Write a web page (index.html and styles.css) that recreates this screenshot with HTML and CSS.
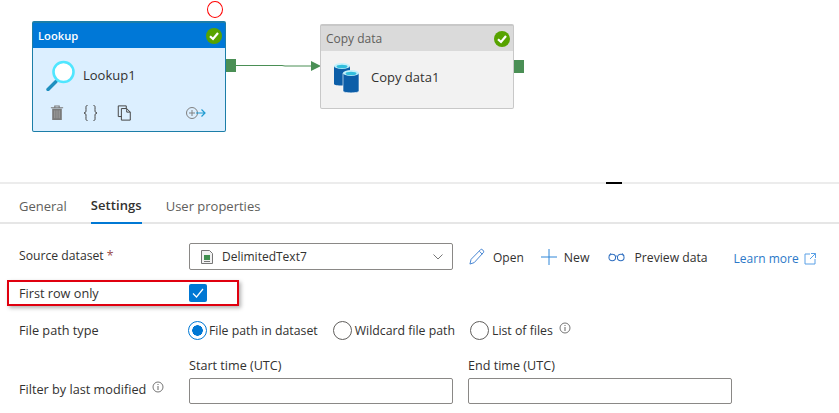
FILE: index.html
```html
<!DOCTYPE html>
<html lang="en">
<head>
<meta charset="utf-8">
<title>Lookup settings</title>
<link rel="stylesheet" href="styles.css">
</head>
<body>
<section class="canvas">
  <div class="marker"></div>
  <div class="node lookup">
    <div class="node-head"><span>Lookup</span>
      <svg class="ok" viewBox="0 0 16 16"><circle cx="8" cy="8" r="8" fill="#57a300"/><path d="M4 8.200 7 11l5-6" fill="none" stroke="#fff" stroke-width="2.200"/></svg>
    </div>
    <div class="node-body">
      <svg class="node-icon" viewBox="0 0 32 32" width="32" height="32"><path d="M3 30.500 11 22.500" stroke="#1f8fbf" stroke-width="3.400" stroke-linecap="round"/><circle cx="18.500" cy="13" r="10" fill="#fff" stroke="#50e6ff" stroke-width="2.600"/></svg>
      <span class="node-name">Lookup1</span>
    </div>
    <div class="node-tools">
      <svg class="t1" viewBox="0 0 16 18" width="14" height="16"><path d="M1 3h14M5.500 3V1h5v2" fill="none" stroke="#7a7a7a" stroke-width="1.300"/><path d="M2.500 4h11v13h-11z" fill="#7a7a7a"/><path d="M5.500 6v9M8 6v9M10.500 6v9" stroke="#a5a5a5"/></svg>
      <svg class="t2" viewBox="0 0 15 16" width="15" height="16"><path d="M4.500 .5C2.500 .5 3 2 3 4.500S3 7.500 1 8c2 .5 2 1 2 3.500s-.5 4 1.500 4M10.500 .5C12.500 .5 12 2 12 4.500s0 3 2 3.500c-2 .5-2 1-2 3.500s.5 4-1.500 4" fill="none" stroke="#444"/></svg>
      <svg class="t3" viewBox="0 0 16 18" width="15" height="16"><path d="M10 3.500V1H1v12h3.500" fill="none" stroke="#444" stroke-width="1.100"/><path d="M4.500 4h6l4 4v9h-10zM10.500 4v4h4" fill="none" stroke="#444" stroke-width="1.100"/></svg>
      <svg class="t4" viewBox="0 0 22 14" width="22" height="14"><circle cx="7" cy="7" r="5.500" fill="none" stroke="#808080"/><path d="M7 4v6M4 7h6" stroke="#808080"/><path d="M11 7h9M16.500 3.500 20 7l-3.500 3.500" fill="none" stroke="#1f9bd1" stroke-width="1.200"/></svg>
    </div>
  </div>
  <div class="port port-a"></div>
  <svg class="link" viewBox="0 0 86 10" width="86" height="10"><path d="M0 4.500H47L50 5H76" fill="none" stroke="#4a8f55"/><path d="M76 0l10 5-10 5z" fill="#4a8f55"/></svg>
  <div class="node copy">
    <div class="node-head"><span>Copy data</span>
      <svg class="ok" viewBox="0 0 16 16"><circle cx="8" cy="8" r="8" fill="#57a300"/><path d="M4 8.200 7 11l5-6" fill="none" stroke="#fff" stroke-width="2.200"/></svg>
    </div>
    <div class="node-body">
      <svg class="node-icon" viewBox="0 0 26 32" width="26" height="32"><path d="M0 4v18c0 2 16 2 16 0V4z" fill="#0c5ea8"/><ellipse cx="8" cy="4" rx="8" ry="3" fill="#c3f1fb"/><ellipse cx="8" cy="4.500" rx="5.500" ry="1.800" fill="#32bedd"/><path d="M9 11v18c0 2.500 16 2.500 16 0V11z" fill="#0c5ea8" stroke="#fff" stroke-width=".6"/><ellipse cx="17" cy="11" rx="8" ry="3" fill="#c3f1fb"/><ellipse cx="17" cy="11.500" rx="5.500" ry="1.800" fill="#32bedd"/></svg>
      <span class="node-name">Copy data1</span>
    </div>
  </div>
  <div class="port port-b"></div>
</section>

<div class="divider"><span class="grip"></span></div>

<nav class="tabs">
  <span class="tab">General</span>
  <span class="tab active">Settings</span>
  <span class="tab">User properties</span>
</nav>

<main class="form">
  <div class="row row-source">
    <div class="label label-source">Source dataset <span class="req">*</span></div>
    <div class="select">
      <svg class="file" viewBox="0 0 12 14" width="12" height="14"><path d="M.5.500h8l3 3v10H.5z" fill="#f2f2f2" stroke="#777"/><path d="M3 5h6v5H3z" fill="#3f8f4f"/><path d="M3 11.500h6" stroke="#777"/></svg>
      <span class="select-text">DelimitedText7</span>
      <svg class="chev" viewBox="0 0 10 6" width="10" height="6"><path d="M.5.500 5 5 9.500.500" fill="none" stroke="#777"/></svg>
    </div>
    <div class="actions">
      <span class="action a-open"><svg viewBox="0 0 18 18" width="17" height="17"><path d="M1 17l1.200-5L12.500 1.500c1-1 3.800 1.800 3 3L5.500 15.500z M11 3.500l3 3" fill="none" stroke="#3f7fd0"/></svg>Open</span>
      <span class="action a-new"><svg viewBox="0 0 16 16" width="16" height="16"><path d="M8 0v16M0 8h16" stroke="#2f86d8"/></svg>New</span>
      <span class="action a-preview"><svg viewBox="0 0 18 10" width="17" height="10"><circle cx="4.500" cy="5.500" r="3.500" fill="none" stroke="#2f6fc0" stroke-width="1.100"/><circle cx="13.500" cy="5.500" r="3.500" fill="none" stroke="#2f6fc0" stroke-width="1.100"/><path d="M8 4.500q1-1 2 0M1 4 3 1M17 4l-2-3" fill="none" stroke="#2f6fc0"/></svg>Preview data</span>
      <span class="learn">Learn more <svg viewBox="0 0 12 12" width="12" height="12"><path d="M6 1H1v10h10V6M7 .5h4.500V5M11.500.500 6 6" fill="none" stroke="#5aa0e6"/></svg></span>
    </div>
  </div>

  <div class="row row-first">
    <div class="label">First row only</div>
    <div class="check"><svg viewBox="0 0 18 18" width="18" height="18"><path d="M4 9.500 7.500 13 14 5" fill="none" stroke="#fff" stroke-width="1.200"/></svg></div>
  </div>

  <div class="row row-path">
    <div class="label">File path type</div>
    <div class="radios">
      <span class="radio on">File path in dataset</span>
      <span class="radio">Wildcard file path</span>
      <span class="radio">List of files</span>
      <svg class="info info-up" viewBox="0 0 12 12" width="12" height="12"><circle cx="6" cy="6" r="5" fill="none" stroke="#666" stroke-width=".9"/><path d="M6 5v4M6 3v1" stroke="#666"/></svg>
    </div>
  </div>

  <div class="row row-filter">
    <div class="label">Filter by last modified <svg class="info" viewBox="0 0 12 12" width="12" height="12"><circle cx="6" cy="6" r="5" fill="none" stroke="#666" stroke-width=".9"/><path d="M6 5v4M6 3v1" stroke="#666"/></svg></div>
    <div class="field"><div class="field-label">Start time (UTC)</div><div class="input"></div></div>
    <div class="field"><div class="field-label">End time (UTC)</div><div class="input"></div></div>
  </div>
</main>
</body>
</html>
```

FILE: styles.css
```css
* { box-sizing: border-box; }
html, body { margin: 0; padding: 0; }
body {
  width: 839px;
  height: 413px;
  overflow: hidden;
  background: #fff;
  font-family: "Open Sans", "Noto Sans", sans-serif;
  font-size: 12px;
  color: #323130;
}

/* free canvas */
.canvas { position: relative; height: 182px; }
.marker {
  position: absolute; left: 207px; top: 1px;
  width: 16px; height: 17px;
  border: 1px solid #f00; border-radius: 50%;
}
.node { position: absolute; border-radius: 2px; }
.lookup {
  left: 32px; top: 21px; width: 194px; height: 111px;
  background: #dcefff; border: 1px solid #1c7ea8; border-top-width: 2px;
}
.copy {
  left: 320px; top: 24px; width: 194px; height: 85px;
  background: #f2f2f2; border: 1px solid #c8c8c8; border-top-width: 2px;
}
.node-head {
  display: flex; align-items: center; justify-content: space-between;
  height: 25px; padding: 0 3px 0 5px;
}
.lookup .node-head { background: #0078d7; color: #fff; font-weight: 600; font-size: 11.2px; }
.copy .node-head { background: #dadada; color: #605e5c; }
.ok { width: 16px; height: 16px; }
.node-body { display: flex; align-items: center; }
.lookup .node-body { height: 57px; padding: 0 0 4px 12px; gap: 6px; }
.copy .node-body { padding: 11px 0 0 13px; gap: 11px; }
.copy .node-name { margin-top: -2px; }
.node-name { font-size: 13px; }
.node-tools { display: flex; align-items: center; padding-left: 17px; }
.t2 { margin-left: 19px; }
.t3 { margin-left: 19px; }
.t4 { margin-left: 53px; }
.port { position: absolute; width: 10px; height: 13px; background: #4a8f55; }
.port-a { left: 226px; top: 59px; }
.port-b { left: 514px; top: 60px; }
.link { position: absolute; left: 235px; top: 61px; }

/* divider */
.divider { position: relative; height: 2px; background: #ececec; }
.grip { position: absolute; left: 606px; top: 0; width: 16px; height: 2px; background: #000; }

/* tabs */
.tabs {
  display: flex; gap: 24px;
  height: 40px; padding: 0 0 0 19px;
  border-bottom: 2px solid #e6e6e6;
  font-size: 13px;
  color: #605e5c;
}
.tab { display: flex; align-items: center; height: 40px; padding-top: 4px; }
.tab.active { color: #323130; font-weight: 600; letter-spacing: .06px; border-bottom: 2px solid #0078d4; }

/* form */
.form { padding-top: 19px; }
.row { display: flex; align-items: center; padding-left: 19px; }
.label { width: 170px; flex: none; font-size: 12.7px; font-weight: 500; line-height: 16px; }
.label-source { font-size: 12.2px; margin-top: -2px; }
.req { color: #9a4a4a; font-weight: 400; }
.row-source { height: 27px; }
.select {
  display: flex; align-items: center;
  width: 264px; height: 27px; padding: 0 9px 0 11px; flex: none;
  border: 1px solid #8a8886; border-radius: 2px;
}
.select-text { margin-left: 9px; flex: 1; }
.actions { display: flex; align-items: center; margin-top: 2px; }
.action { display: flex; align-items: center; color: #323130; }
.action svg { margin-top: -2px; }
.a-open { margin-left: 16px; gap: 7px; }
.a-new { margin-left: 17px; gap: 7px; font-size: 12.3px; }
.a-preview { margin-left: 19px; gap: 9px; font-size: 12.2px; }
.learn { display: flex; align-items: center; gap: 5px; margin-left: 26px; margin-top: 2px; color: #2b78c8; }

.row-first {
  width: 232px; height: 26px; margin: 10px 0 0 7px; padding-left: 10px;
  border: 2px solid #e0000f;
  box-shadow: 2px 2px 4px rgba(0,0,0,.3);
}
.check {
  width: 18px; height: 18px;
  background: #0078d4; border-radius: 2px;
}
.row-path { height: 20px; margin-top: 14px; }
.radios { display: flex; align-items: center; font-size: 12.3px; }
.radio { display: flex; align-items: center; gap: 3px; margin-right: 15px; }
.radio:first-child { gap: 2px; margin-left: -1px; }
.radio::before {
  content: ""; width: 17px; height: 17px; flex: none;
  border: 1px solid #605e5c; border-radius: 50%; background: #fff;
}
.radio.on::before {
  border-color: #0078d4;
  background: radial-gradient(circle, #0078d4 0 5px, #fff 5.500px);
}
.info-up { margin: -5px 0 0 -9px; }
.row-filter { align-items: flex-end; margin-top: 18px; }
.row-filter > .label { padding-bottom: 7px; }
.label .info { margin-left: 2px; vertical-align: 1px; }
.field { width: 264px; flex: none; margin-right: 15px; }
.field-label { height: 20px; font-size: 12.6px; font-weight: 500; line-height: 16px; }
.input { height: 26px; border: 1px solid #8a8886; border-radius: 2px; }
```
